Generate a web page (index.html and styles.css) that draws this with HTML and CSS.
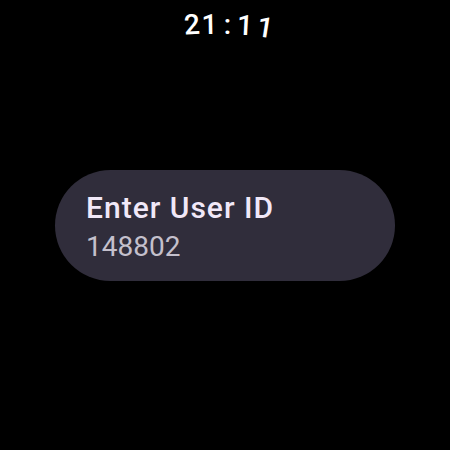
FILE: index.html
```html
<!DOCTYPE html>
<html>
<head>
<meta charset="utf-8">
<link rel="stylesheet" href="styles.css">
</head>
<body>
<div class="screen">
  <div class="time">
    <span class="c c1">2</span><span class="c c2">1</span><span class="c c3">:</span><span class="c c4">1</span><span class="c c5">1</span>
  </div>
  <div class="content">
    <div class="chip">
      <div class="label">Enter User ID</div>
      <div class="value">148802</div>
    </div>
  </div>
</div>
</body>
</html>
```
FILE: styles.css
```css
html, body {
  margin: 0;
  padding: 0;
  background: #000;
}
.screen {
  width: 450px;
  height: 450px;
  background: #000;
  display: flex;
  flex-direction: column;
  align-items: center;
  font-family: Roboto, "Noto Sans", sans-serif;
}
.time {
  margin-top: 9px;
  margin-left: 12px;
  height: 32px;
  display: flex;
  color: #fff;
  font-size: 28px;
  line-height: 32px;
  font-weight: 500;
}
.c {
  display: inline-block;
  text-align: center;
}
.c1 { width: 16px; transform: rotate(-3deg); }
.c2 { width: 19px; transform: rotate(-1deg); }
.c3 { width: 18px; }
.c4 { width: 14px; transform: translateY(1px) rotate(3deg); }
.c5 { width: 28px; transform: translateY(3px) rotate(9deg); }
.content {
  flex: 1;
  display: flex;
  align-items: center;
  justify-content: center;
  padding-bottom: 40px;
}
.chip {
  width: 340px;
  height: 111px;
  box-sizing: border-box;
  border-radius: 56px;
  background: #302d3b;
  padding: 20px 31px 0;
  display: flex;
  flex-direction: column;
}
.label {
  color: #f1e8f8;
  font-size: 30px;
  font-weight: 500;
  line-height: 36px;
  letter-spacing: 1px;
}
.value {
  margin-top: 4px;
  color: #c4c0cc;
  font-size: 28px;
  line-height: 34px;
}
```
